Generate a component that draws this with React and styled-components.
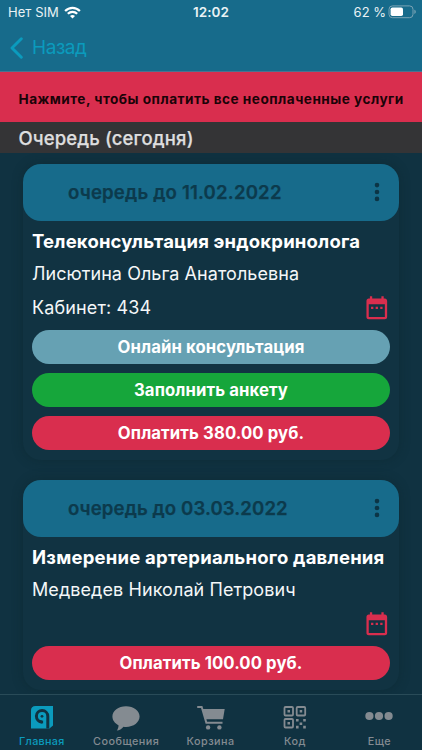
import React from "react";
import styled, { createGlobalStyle } from "styled-components";

const GlobalStyle = createGlobalStyle`
  * { box-sizing: border-box; }
  body { margin: 0; background: #103241; }
`;

const Screen = styled.div`
  width: 422px;
  height: 750px;
  display: flex;
  flex-direction: column;
  overflow: hidden;
  background: #103241;
  color: #f4f7f8;
  font-family: Inter, "Liberation Sans", sans-serif;
  white-space: nowrap;
`;

const TopBar = styled.header`
  height: 72px;
  flex: none;
  background: #176b8b;
  border-bottom: 1px solid #4a7390;
`;

const StatusBar = styled.div`
  height: 24px;
  display: grid;
  grid-template-columns: 1fr auto 1fr;
  align-items: center;
  padding: 0 6px 0 8px;
  font-size: 13px;
  color: #e9f2f5;
`;

const StatusSide = styled.div`
  display: flex;
  align-items: center;
  gap: ${(p) => p.$gap}px;
  justify-content: ${(p) => (p.$end ? "flex-end" : "flex-start")};
  letter-spacing: ${(p) => p.$spacing}px;
`;

const Clock = styled.div`
  padding-right: 2px;
  font-size: 13.5px;
  font-weight: 600;
  letter-spacing: 0.1px;
`;

const BackButton = styled.button`
  display: flex;
  align-items: center;
  gap: 8px;
  height: 47px;
  padding: 0 0 0 10px;
  border: 0;
  background: none;
  color: #0b9bbd;
  font: 400 19px Inter, sans-serif;
  letter-spacing: -0.45px;
`;

const Notice = styled.div`
  height: 50px;
  flex: none;
  display: flex;
  align-items: center;
  padding: 4px 0 0 18.5px;
  background: #d92e4e;
  color: #1b0308;
  font-size: 13.6px;
  font-weight: 700;
  letter-spacing: 0.49px;
`;

const SectionTitle = styled.h2`
  margin: 0;
  height: 31px;
  flex: none;
  display: flex;
  align-items: center;
  padding: 1px 0 0 18.5px;
  background: #343436;
  color: #dededf;
  font-size: 18.5px;
  font-weight: 500;
  letter-spacing: 0.13px;
  -webkit-text-stroke: 0.25px #dededf;
`;

const List = styled.main`
  flex: 1;
  min-height: 0;
  display: flex;
  flex-direction: column;
  gap: 20.5px;
  padding: 11.3px 23px 0;
  overflow: hidden;
`;

const Card = styled.article`
  flex: none;
  border-radius: 18px;
  background: #113342;
  box-shadow: 0 0 11px rgba(10, 38, 42, 0.45);
`;

const CardHeader = styled.div`
  height: 57px;
  display: flex;
  align-items: center;
  justify-content: space-between;
  padding: 0 19px 1px 45px;
  border-radius: 18px;
  background: #176b8b;
  color: #0c3a4c;
  font-size: 18.6px;
  font-weight: 600;
  letter-spacing: ${(p) => p.$spacing}px;
  -webkit-text-stroke: 0.25px #0c3a4c;
`;

const CardBody = styled.div`
  padding: 4px 9px 10px;
`;

const Service = styled.div`
  height: 33px;
  line-height: 32px;
  font-size: 18.5px;
  font-weight: 700;
  color: #fff;
  letter-spacing: ${(p) => p.$spacing}px;
`;

const Doctor = styled.div`
  height: 31px;
  line-height: 31px;
  font-size: 18px;
  letter-spacing: ${(p) => p.$spacing}px;
`;

const RoomRow = styled.div`
  height: 37px;
  display: flex;
  align-items: center;
  justify-content: space-between;
  font-size: 18px;
  letter-spacing: 0.14px;
`;

const CalendarIcon = styled.svg`
  width: 27.6px;
  height: 27.6px;
  margin-right: -0.4px;
  fill: #d92e4e;
`;

const Actions = styled.div`
  display: flex;
  flex-direction: column;
  gap: 8.8px;
  padding-top: 4px;
`;

const Action = styled.button`
  height: 34px;
  padding: 0;
  border: 0;
  border-radius: 17px;
  background: ${(p) => p.$color};
  color: #fff;
  font: 700 16.7px Inter, sans-serif;
  letter-spacing: 0.1px;
`;

const TabBar = styled.nav`
  height: 56px;
  flex: none;
  display: grid;
  grid-template-columns: repeat(5, 1fr);
  border-top: 1px solid #294b58;
  background: #103241;
`;

const Tab = styled.div`
  display: flex;
  flex-direction: column;
  align-items: center;
  padding: 9px 0.8px 0 0;
  font-size: 10.8px;
  font-weight: 500;
  letter-spacing: ${(p) => (p.$active ? 0.3 : 0.5)}px;
  color: ${(p) => (p.$active ? "#0b9bbd" : "#848b91")};

  svg {
    width: 30px;
    height: 28px;
    margin-bottom: 3px;
    flex: none;
  }
`;

const Wifi = () => (
  <svg width="17" height="13" viewBox="0 0 17 13" fill="none" stroke="#fff" strokeWidth="2.2">
    <path d="M1.1 5C5.3.7 11.7.7 15.9 5" />
    <path d="M3.8 7.8C6.5 5.1 10.5 5.1 13.2 7.8" />
    <path d="M8.5 12.5 6 9.9c1.4-1.3 3.6-1.3 5 0z" fill="#fff" stroke="none" />
  </svg>
);

const Battery = () => (
  <svg width="28" height="14" viewBox="0 0 28 14">
    <rect x="1" y=".9" width="24" height="11.8" rx="3.4" fill="none" stroke="#7ba4b5" />
    <rect x="2.6" y="2.5" width="12.4" height="8.6" rx="1.8" fill="#fff" />
    <path d="M26.4 4.7c1.8.5 1.8 3.7 0 4.2z" fill="#7ba4b5" />
  </svg>
);

const Chevron = () => (
  <svg width="14" height="22" viewBox="0 0 14 22" fill="none" stroke="currentColor" strokeWidth="2.9" strokeLinecap="round" strokeLinejoin="round">
    <path d="M11.3 1.7 2 11l9.3 9.3" />
  </svg>
);

const Menu = () => (
  <svg width="6" height="20" viewBox="0 0 6 20" fill="#0c3546">
    <circle cx="3" cy="3.1" r="2.3" />
    <circle cx="3" cy="10" r="2.3" />
    <circle cx="3" cy="16.9" r="2.3" />
  </svg>
);

const Calendar = () => (
  <CalendarIcon viewBox="0 0 24 24">
    <path d="M9 11H7v2h2v-2zm4 0h-2v2h2v-2zm4 0h-2v2h2v-2zm2-7h-1V2h-2v2H8V2H6v2H5c-1.1 0-2 .9-2 2v14c0 1.1.9 2 2 2h14c1.1 0 2-.9 2-2V6c0-1.1-.9-2-2-2zm0 16H5V9h14v11z" />
  </CalendarIcon>
);

const LogoIcon = () => (
  <svg viewBox="0 0 30 28">
    <path d="M8.5 2H26v19.5l-3.5 3H4V6.5Q4 2 8.5 2z" fill="currentColor" />
    <path d="M14.9 17.9a5.7 5.7 0 1 1 5.9-5.7v12.4" fill="none" stroke="#103241" strokeWidth="3" />
    <path d="M14.9 16.6v2.8" fill="none" stroke="#103241" strokeWidth="2.4" />
    <circle cx="15" cy="12.3" r="1.4" fill="#103241" />
  </svg>
);

const ChatIcon = () => (
  <svg viewBox="0 0 30 28" fill="currentColor">
    <path d="M15 2.2c7.6 0 13.6 4.6 13.6 10.4S22.6 23 15 23c-.9 0-1.7-.1-2.5-.2-1.8 2.2-4.2 3.7-6.7 3.7 1.1-1.2 1.8-3.3 1.7-5.2C3.9 19.5 1.4 16.3 1.4 12.6 1.4 6.8 7.4 2.2 15 2.2z" />
  </svg>
);

const CartIcon = () => (
  <svg viewBox="0 0 30 28" fill="currentColor">
    <path d="M1.2 2h5.2l.9 2.9h21.4l-1.7 10.4H10.4l.7 2.5h15.4v2H9.6L5 4H1.2z" />
    <circle cx="12.1" cy="23.4" r="2.2" />
    <circle cx="23.4" cy="23.4" r="2.2" />
  </svg>
);

const QrIcon = () => (
  <svg viewBox="0 0 30 28">
    <g fill="none" stroke="currentColor" strokeWidth="1.8">
      <rect x="4.5" y="3" width="8.5" height="8.5" rx="1" />
      <rect x="16.7" y="3" width="8.5" height="8.5" rx="1" />
      <rect x="4.5" y="15" width="8.5" height="8.5" rx="1" />
    </g>
    <path
      fill="currentColor"
      d="M7.5 6h2.5v2.5H7.5zM19.7 6h2.5v2.5h-2.5zM7.5 18h2.5v2.5H7.5zM16 14.9h2.6v2.6H16zM23.2 14.9h2.6v2.6h-2.6zM19.6 18.4h2.6v2.6h-2.6zM16 21.8h2.6v2.6H16zM23.2 21.8h2.6v2.6h-2.6z"
    />
  </svg>
);

const MoreIcon = () => (
  <svg viewBox="0 0 30 28" fill="currentColor">
    <circle cx="5.4" cy="12" r="4.1" />
    <circle cx="15" cy="12" r="4.1" />
    <circle cx="24.6" cy="12" r="4.1" />
  </svg>
);

const appointments = [
  {
    until: "очередь до 11.02.2022",
    untilSpacing: 0.18,
    service: "Телеконсультация эндокринолога",
    serviceSpacing: 0.18,
    doctor: "Лисютина Ольга Анатольевна",
    doctorSpacing: 0.05,
    room: "Кабинет: 434",
    actions: [
      { label: "Онлайн консультация", color: "#66a1b3" },
      { label: "Заполнить анкету", color: "#16a63b" },
      { label: "Оплатить 380.00 руб.", color: "#d92e4e" },
    ],
  },
  {
    until: "очередь до 03.03.2022",
    untilSpacing: 0.1,
    service: "Измерение артериального давления",
    serviceSpacing: 0.22,
    doctor: "Медведев Николай Петрович",
    doctorSpacing: 0.08,
    room: "",
    actions: [{ label: "Оплатить 100.00 руб.", color: "#d92e4e" }],
  },
];

const tabs = [
  { label: "Главная", Icon: LogoIcon, active: true },
  { label: "Сообщения", Icon: ChatIcon },
  { label: "Корзина", Icon: CartIcon },
  { label: "Код", Icon: QrIcon },
  { label: "Еще", Icon: MoreIcon },
];

export default function App() {
  return (
    <Screen>
      <GlobalStyle />
      <TopBar>
        <StatusBar>
          <StatusSide $gap={5.5} $spacing={0.05}>
            <span>Нет SIM</span>
            <Wifi />
          </StatusSide>
          <Clock>12:02</Clock>
          <StatusSide $gap={2} $spacing={0} $end>
            <span>62 %</span>
            <Battery />
          </StatusSide>
        </StatusBar>
        <BackButton>
          <Chevron />
          <span>Назад</span>
        </BackButton>
      </TopBar>
      <Notice>Нажмите, чтобы оплатить все неоплаченные услуги</Notice>
      <SectionTitle>Очередь (сегодня)</SectionTitle>
      <List>
        {appointments.map((item) => (
          <Card key={item.until}>
            <CardHeader $spacing={item.untilSpacing}>
              <span>{item.until}</span>
              <Menu />
            </CardHeader>
            <CardBody>
              <Service $spacing={item.serviceSpacing}>{item.service}</Service>
              <Doctor $spacing={item.doctorSpacing}>{item.doctor}</Doctor>
              <RoomRow>
                <span>{item.room}</span>
                <Calendar />
              </RoomRow>
              <Actions>
                {item.actions.map((action) => (
                  <Action key={action.label} $color={action.color}>
                    {action.label}
                  </Action>
                ))}
              </Actions>
            </CardBody>
          </Card>
        ))}
      </List>
      <TabBar>
        {tabs.map(({ label, Icon, active }) => (
          <Tab key={label} $active={active}>
            <Icon />
            <span>{label}</span>
          </Tab>
        ))}
      </TabBar>
    </Screen>
  );
}
